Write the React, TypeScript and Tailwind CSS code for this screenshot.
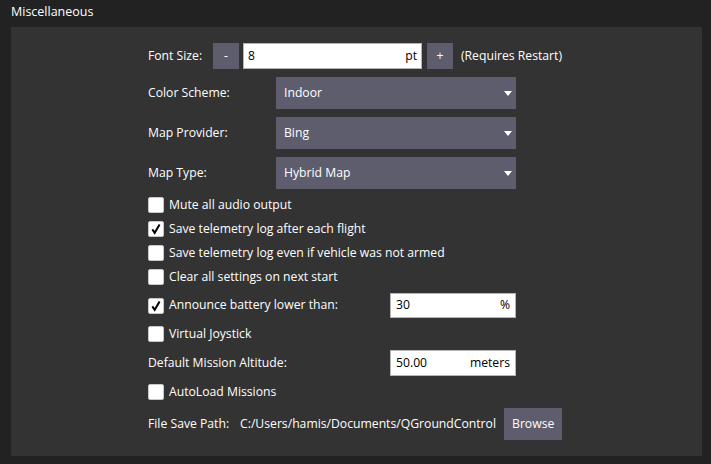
import React from "react";

const font = { fontFamily: '"Open Sans", "Liberation Sans", sans-serif' };

function Check({ checked, label }: { checked?: boolean; label: string }) {
  return (
    <div className="flex h-4 items-center gap-[5px]">
      <div className="flex h-4 w-4 items-center justify-center rounded-[2px] border border-[#c8c8c8] bg-white">
        {checked && (
          <svg width="12" height="12" viewBox="0 0 12 12">
            <path d="M2.3 6.4 L4.7 9.8 L9.6 1.6" fill="none" stroke="#000" strokeWidth="2" />
          </svg>
        )}
      </div>
      <span>{label}</span>
    </div>
  );
}

function Combo({ label, value }: { label: string; value: string }) {
  return (
    <div className="flex items-center">
      <span className="w-[128px]">{label}</span>
      <div className="flex h-8 w-[240px] items-center justify-between bg-[#5e5d6d] pl-[8px] pr-[4px]">
        <span>{value}</span>
        <svg width="8" height="5" viewBox="0 0 8 5">
          <path d="M0 0 H8 L4 5 Z" fill="#fff" />
        </svg>
      </div>
    </div>
  );
}

function Field({ value, unit, h }: { value: string; unit: string; h: string }) {
  return (
    <div className={`flex w-[126px] items-center justify-between border border-[#b5b5b5] bg-white px-[5px] text-black ${h}`}>
      <span>{value}</span>
      <span>{unit}</span>
    </div>
  );
}

export default function App() {
  return (
    <div className="h-[464px] w-[711px] bg-[#222222] text-[12.2px] text-white" style={font}>
      <div className="flex h-[27px] items-center px-[11px] pb-[3px] text-[12.5px]">Miscellaneous</div>
      <div className="ml-[11px] w-[691px] bg-[#333333] pt-[16px] pb-[16px] pl-[137px]">
        <div className="flex flex-col gap-2">
          <div className="flex h-[26px] items-center">
            <span className="w-[65px]">Font Size:</span>
            <div className="flex h-[26px] w-[26px] items-center justify-center bg-[#5e5d6d]">-</div>
            <div className="ml-[4px] flex h-[26px] w-[179px] items-center justify-between border border-[#b5b5b5] bg-white px-[4px] text-black">
              <span>8</span>
              <span>pt</span>
            </div>
            <div className="ml-[5px] flex h-[26px] w-[26px] items-center justify-center bg-[#5e5d6d]">+</div>
            <span className="ml-[8px]">(Requires Restart)</span>
          </div>
          <Combo label="Color Scheme:" value="Indoor" />
          <Combo label="Map Provider:" value="Bing" />
          <Combo label="Map Type:" value="Hybrid Map" />
          <Check label="Mute all audio output" />
          <Check checked label="Save telemetry log after each flight" />
          <Check label="Save telemetry log even if vehicle was not armed" />
          <Check label="Clear all settings on next start" />
          <div className="flex h-[25px] items-center">
            <div className="w-[242px]">
              <Check checked label="Announce battery lower than:" />
            </div>
            <Field value="30" unit="%" h="h-[25px]" />
          </div>
          <Check label="Virtual Joystick" />
          <div className="flex h-[26px] items-center">
            <span className="w-[242px]">Default Mission Altitude:</span>
            <Field value="50.00" unit="meters" h="h-[26px]" />
          </div>
          <Check label="AutoLoad Missions" />
          <div className="flex h-8 items-center">
            <span className="w-[92px]">File Save Path:</span>
            <span>C:/Users/hamis/Documents/QGroundControl</span>
            <div className="ml-[8px] flex h-8 items-center bg-[#5e5d6d] px-[8px]">Browse</div>
          </div>
        </div>
      </div>
    </div>
  );
}
